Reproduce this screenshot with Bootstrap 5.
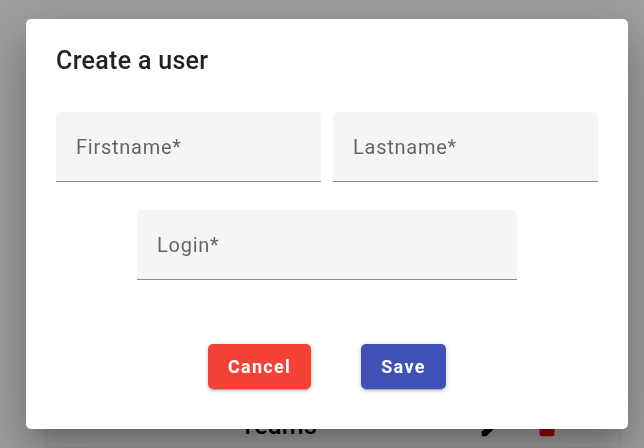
<!DOCTYPE html>
<html lang="en">
<head>
<meta charset="utf-8">
<meta name="viewport" content="width=device-width, initial-scale=1">
<title>Create a user</title>
<link href="https://cdn.jsdelivr.net/npm/bootstrap@5.3.0/dist/css/bootstrap.min.css" rel="stylesheet">
<style>
body { font-family: Roboto, "Liberation Sans", sans-serif; background: #fff; overflow: hidden; }
.page { height: 448px; padding: 120px 25px 0 47px; }
.team-panel { background: #fff; box-shadow: 0 3px 1px -2px rgba(0,0,0,.14), 0 1px 2px rgba(0,0,0,.14), 0 1px 4px rgba(0,0,0,.06); }
.team-row { height: 54px; padding: 8px 57px 0 193px; border-bottom: 1px solid #f8f0f0; }
.team-name { font-size: 25px; line-height: 30px; font-weight: 500; letter-spacing: .3px; color: #000; padding-top: 2px; }
.dim { background: rgba(0,0,0,.38); padding: 19px 16px 19px 26px; }
.dialog { border: 0; border-radius: 5px; padding: 0 30px; height: 410px; box-shadow: 0 14px 19px -9px rgba(0,0,0,.2), 0 30px 47px 4px rgba(0,0,0,.14), 0 11px 57px 10px rgba(0,0,0,.12); }
.dialog-title { font-size: 25px; line-height: 39px; font-weight: 500; letter-spacing: .31px; color: rgba(0,0,0,.87); padding-top: 22px; margin-bottom: 32px; }
.field { height: 70px; background: #f5f5f5; border-bottom: 1px solid #8c8c8c; border-radius: 5px 5px 0 0; padding: 0 20px; font-size: 20px; letter-spacing: .74px; color: rgba(0,0,0,.6); }
.field-gap { gap: 12px; }
.login-field { width: 380px; margin-top: 28px; }
.actions { gap: 50px; margin-top: 64px; }
.btn-action { height: 45px; padding: 0; border: 0; border-radius: 5px; font-size: 18px; font-weight: 700; letter-spacing: 1.3px; color: #fff; box-shadow: 0 4px 1px -3px rgba(0,0,0,.2), 0 2px 3px rgba(0,0,0,.14), 0 1px 6px rgba(0,0,0,.12); }
.btn-cancel { width: 103px; --bs-btn-hover-bg: #e53935; background: #f44336; }
.btn-save { width: 85px; --bs-btn-hover-bg: #3949ab; background: #3f51b5; }
</style>
<script src="https://cdn.jsdelivr.net/npm/bootstrap@5.3.0/dist/js/bootstrap.bundle.min.js"></script>
</head>
<body>
<main class="page d-flex flex-column" aria-hidden="true">
  <section class="team-panel flex-grow-1 d-flex flex-column justify-content-end">
    <div class="team-row d-flex align-items-center justify-content-between">
      <span class="team-name">Teams</span>
      <div class="d-flex gap-4">
        <svg width="30" height="30" viewBox="0 0 24 24"><path d="M3 17.25V21h3.75L17.8 9.94l-3.75-3.75zM20.7 7.04a1 1 0 0 0 0-1.41l-2.34-2.34a1 1 0 0 0-1.41 0l-1.83 1.83 3.75 3.75z"/></svg>
        <svg width="30" height="30" viewBox="0 0 24 24"><path fill="#f00" d="M6 19a2 2 0 0 0 2 2h8a2 2 0 0 0 2-2V7H6zM19 4h-3.5l-1-1h-5l-1 1H5v2h14z"/></svg>
      </div>
    </div>
  </section>
</main>
<div class="dim position-fixed top-0 start-0 w-100 h-100">
  <div class="dialog modal-content bg-white" role="dialog">
    <h1 class="dialog-title">Create a user</h1>
    <div class="field-gap d-flex">
      <div class="field d-flex align-items-center flex-fill w-50">Firstname*</div>
      <div class="field d-flex align-items-center flex-fill w-50">Lastname*</div>
    </div>
    <div class="field login-field d-flex align-items-center mx-auto">Login*</div>
    <div class="actions d-flex justify-content-center">
      <button type="button" class="btn btn-action btn-cancel">Cancel</button>
      <button type="button" class="btn btn-action btn-save">Save</button>
    </div>
  </div>
</div>
</body>
</html>
